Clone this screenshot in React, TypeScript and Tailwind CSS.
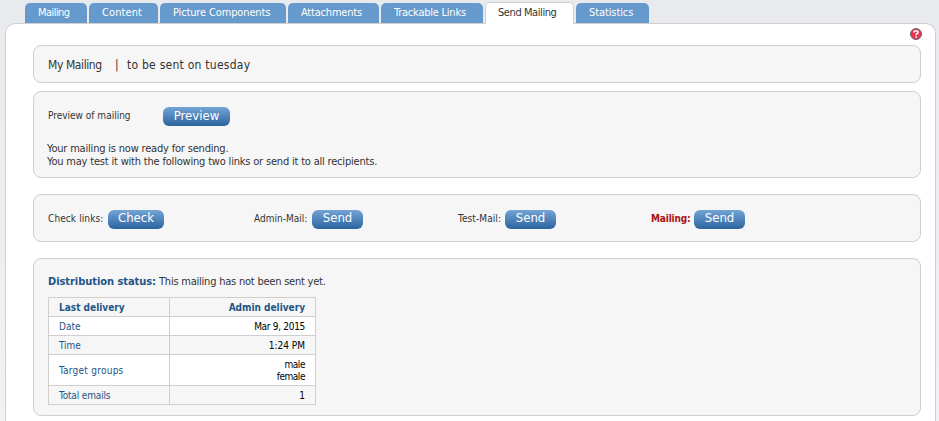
import type { ReactNode } from "react";

const FONT = "font-['DejaVu_Sans_Condensed','DejaVu_Sans',sans-serif] [font-stretch:condensed]";

const tabs = [
  { label: "Mailing", w: "w-[62px]", ls: "tracking-[-0.55px]" },
  { label: "Content", w: "w-[69px]", ls: "tracking-[0.1px]" },
  { label: "Picture Components", w: "w-[126px]", ls: "tracking-[-0.14px]" },
  { label: "Attachments", w: "w-[91px]", ls: "tracking-[-0.2px]" },
  { label: "Trackable Links", w: "w-[102px]", ls: "tracking-[-0.23px]" },
  { label: "Send Mailing", w: "w-[89px]", ls: "tracking-[-0.42px]", active: true },
  { label: "Statistics", w: "w-[73px]", ls: "tracking-[-0.1px]" },
];

function Button({ children, w, lh = "leading-[15px]" }: { children: ReactNode; w: string; lh?: string }) {
  return (
    <button
      className={`${w} ${lh} flex h-[19px] shrink-0 items-start justify-center rounded-[6px] bg-gradient-to-b from-[#74a4d5] to-[#2b649f] text-[13px] whitespace-nowrap text-white`}
    >
      {children}
    </button>
  );
}

function Box({ children, className }: { children: ReactNode; className: string }) {
  return (
    <section className={`mr-[14px] ml-[27px] rounded-[8px] border border-[#cfcfcf] bg-[#f6f6f6] pl-[14px] ${className}`}>
      {children}
    </section>
  );
}

type RowProps = { name: string; h: string; shaded?: boolean; nameLs?: string; valueLs?: string; children: ReactNode };

function Row({ name, h, shaded, nameLs = "", valueLs = "", children }: RowProps) {
  return (
    <div className={`flex ${h} items-center border-b border-[#cfcfcf] text-[10px] leading-[12px] ${shaded ? "bg-[#f6f6f6]" : "bg-white"}`}>
      <div className={`flex h-full w-[121px] items-center border-r border-[#cfcfcf] pt-[2px] pl-[10px] text-[#225588] ${nameLs}`}>
        {name}
      </div>
      <div className={`flex-1 pt-[2px] pr-[10px] text-right text-black ${valueLs}`}>{children}</div>
    </div>
  );
}

export default function App() {
  return (
    <div className={`${FONT} flex h-[421px] w-[939px] flex-col overflow-hidden bg-gradient-to-b from-[#e8eaee] to-[#f1f2f5] text-[#333]`}>
      <nav className="z-10 flex h-[24px] items-start gap-[2px] pl-[25px]">
        {tabs.map((t) => (
          <div
            key={t.label}
            className={`${t.w} ${t.ls} shrink-0 text-[11px] whitespace-nowrap ${
              t.active
                ? "mt-[2px] h-[22px] rounded-t-[5px] border-x border-t border-[#cfcfcf] bg-white pl-[12px] leading-[20px] text-[#333]"
                : "mt-[3px] h-[20px] rounded-t-[5px] bg-[#6699cc] pl-[13px] leading-[19px] text-white"
            }`}
          >
            {t.label}
          </div>
        ))}
      </nav>
      <main className="-mt-px mr-[3px] ml-[5px] h-[420px] shrink-0 rounded-t-[10px] border border-b-0 border-[#cfcfcf] bg-white">
        <div className="flex h-[21px] justify-end pt-[4px] pr-[13px]">
          <svg width="12" height="12" viewBox="0 0 12 12">
            <circle cx="6" cy="6" r="5.5" fill="#e8344e" stroke="#6d6678" />
            <path d="M4 4.4V3.6L4.8 2.9H7.2L8 3.7V4.8L6.2 6.3V7.2M6.1 8.2V9.7" fill="none" stroke="#fff" strokeWidth="1.5" />
          </svg>
        </div>
        <Box className="flex h-[38px] items-center pt-[2px] text-[12px] whitespace-nowrap">
          <span className="w-[67px] tracking-[-0.4px]">My Mailing</span>
          <span className="w-[12px]">|</span>
          <span className="tracking-[0.25px]">to be sent on tuesday</span>
        </Box>
        <Box className="mt-[8px] h-[87px] pt-[15px]">
          <div className="flex h-[19px] items-center text-[10px]">
            <span className="w-[115px] pb-[2px]">Preview of mailing</span>
            <Button w="w-[67px]" lh="leading-[17px]">Preview</Button>
          </div>
          <p className="mt-[16px] -ml-px text-[11px] leading-[13px] tracking-[-0.19px] whitespace-nowrap">
            Your mailing is now ready for sending.
            <br />
            You may test it with the following two links or send it to all recipients.
          </p>
        </Box>
        <Box className="mt-[16px] flex h-[48px] items-start pt-[15px] text-[10px] leading-[17px] whitespace-nowrap">
          <span className="w-[60px] tracking-[0.1px]">Check links:</span>
          <Button w="w-[56px]">Check</Button>
          <span className="ml-[90px] w-[58px]">Admin-Mail:</span>
          <Button w="w-[51px]">Send</Button>
          <span className="ml-[95px] w-[47px] tracking-[0.1px]">Test-Mail:</span>
          <Button w="w-[51px]">Send</Button>
          <b className="ml-[95px] w-[43px] tracking-[-0.15px] text-[#aa1111]">Mailing:</b>
          <Button w="w-[51px]">Send</Button>
        </Box>
        <Box className="mt-[16px] h-[158px] pt-[16px]">
          <div className="flex h-[14px] items-center text-[11px] leading-[14px] whitespace-nowrap">
            <b className="w-[111px] tracking-[-0.05px] text-[#225588]">Distribution status:</b>
            <span className="tracking-[-0.22px]">This mailing has not been sent yet.</span>
          </div>
          <div className="mt-[8px] w-[268px] border-x border-t border-[#cfcfcf]">
            <div className="flex h-[19px] items-center border-b border-[#cfcfcf] text-[10px] leading-[12px] font-bold text-[#225588]">
              <div className="flex h-full w-[121px] items-center border-r border-[#cfcfcf] pt-[2px] pl-[10px]">Last delivery</div>
              <div className="flex-1 pt-[2px] pr-[10px] text-right">Admin delivery</div>
            </div>
            <Row name="Date" h="h-[19px]" valueLs="tracking-[-0.3px]">Mar 9, 2015</Row>
            <Row name="Time" h="h-[19px]" nameLs="tracking-[-0.1px]" shaded>1:24 PM</Row>
            <Row name="Target groups" h="h-[31px]" nameLs="tracking-[0.25px]" valueLs="tracking-[-0.45px]">male<br />female</Row>
            <Row name="Total emails" h="h-[19px]" nameLs="tracking-[-0.15px]" shaded>1</Row>
          </div>
        </Box>
      </main>
    </div>
  );
}
